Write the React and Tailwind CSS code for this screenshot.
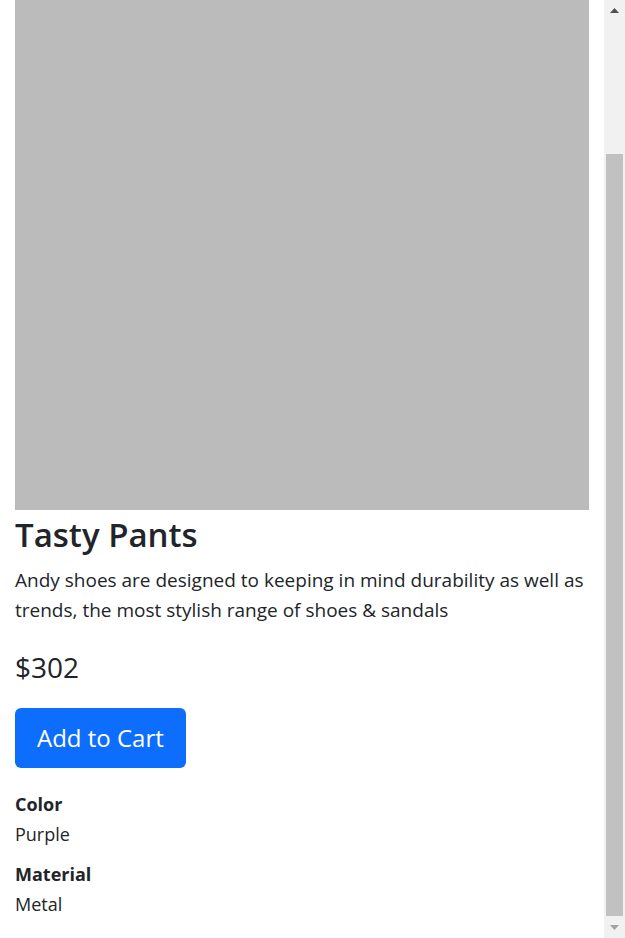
import React from 'react';

const Scrollbar = () => (
  <div className="w-[21px] shrink-0 bg-[#f1f1f1] flex flex-col items-center">
    <div className="h-[20px] flex items-center justify-center">
      <svg width="9" height="5" viewBox="0 0 9 5">
        <path d="M0 5 L4.5 0 L9 5 Z" fill="#505050" />
      </svg>
    </div>
    <div className="h-[134px]" />
    <div className="w-[17px] h-[762px] bg-[#c1c1c1]" />
    <div className="flex-1 flex items-center justify-center">
      <svg width="9" height="5" viewBox="0 0 9 5">
        <path d="M0 0 L9 0 L4.5 5 Z" fill="#a3a3a3" />
      </svg>
    </div>
  </div>
);

const App = () => {
  return (
    <div
      className="flex w-[625px] h-[938px] overflow-hidden bg-white text-[#212529]"
      style={{ fontFamily: '"Open Sans", "Noto Sans", sans-serif' }}
    >
      <div className="flex-1 px-[15px]">
        <div className="h-[510px] bg-[#bbbbbb]" />
        <h1 className="text-[33px] leading-[48px] font-semibold mt-[1px]">Tasty Pants</h1>
        <p className="text-[19px] leading-[30px] mt-[6px]">
          Andy shoes are designed to keeping in mind durability as well as trends, the most stylish range of shoes &amp; sandals
        </p>
        <p className="text-[28px] leading-[42px] mt-[21px]">$302</p>
        <button className="mt-[20px] h-[60px] px-[22px] bg-[#0d6efd] text-white text-[24px] rounded-[6px]">
          Add to Cart
        </button>
        <div className="mt-[21px] text-[18px] leading-[30px]">
          <div className="font-bold">Color</div>
          <div>Purple</div>
          <div className="font-bold mt-[10px]">Material</div>
          <div>Metal</div>
        </div>
      </div>
      <Scrollbar />
    </div>
  );
};

export default App;
